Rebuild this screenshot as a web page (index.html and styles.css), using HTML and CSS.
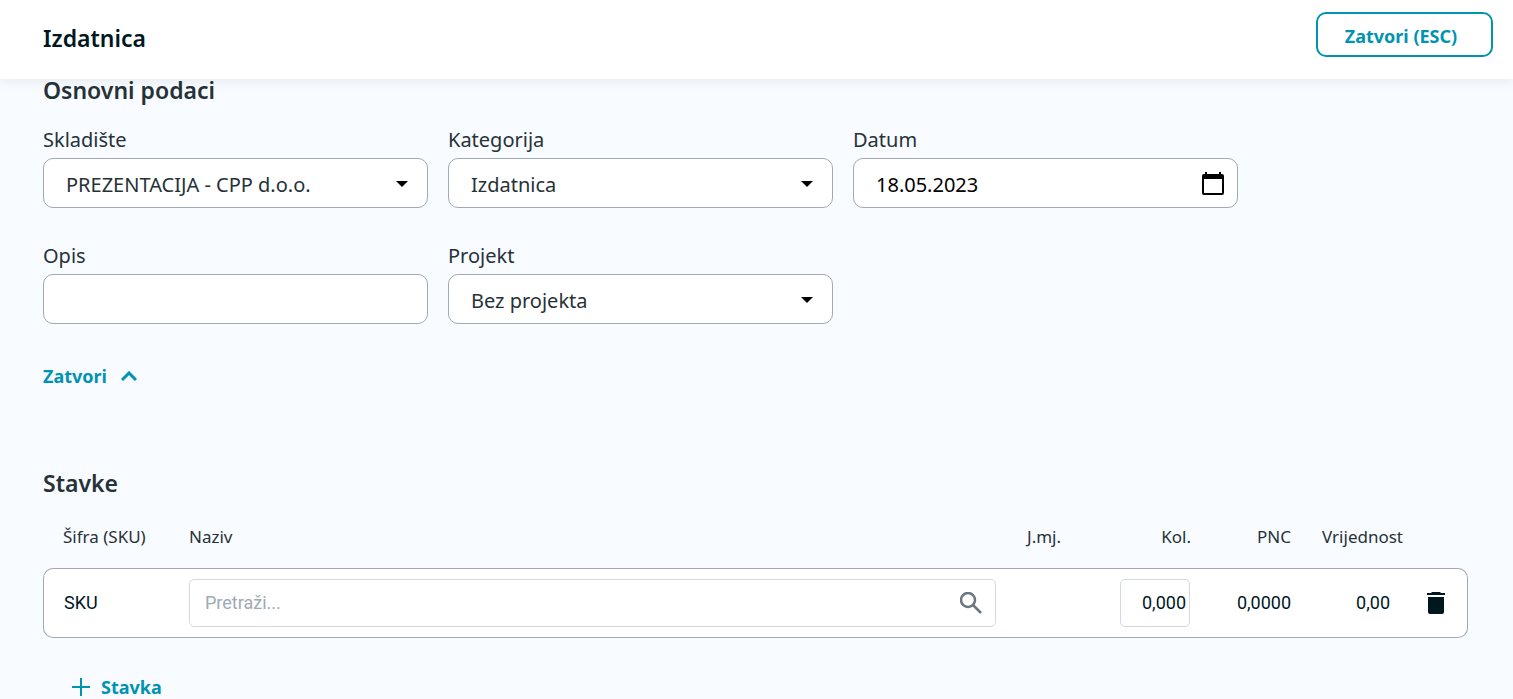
FILE: index.html
```
<!DOCTYPE html>
<html lang="hr">
<head>
    <meta charset="UTF-8">
    <meta name="viewport" content="width=device-width, initial-scale=1.0">
    <title>Izdatnica</title>
    <link rel="stylesheet" href="styles.css">
</head>
<body>
    <header class="topbar">
        <h1 class="title">Izdatnica</h1>
        <button type="button" class="btn-outline">Zatvori (ESC)</button>
    </header>

    <main class="content">
        <section>
            <h2 class="section-title">Osnovni podaci</h2>
            <form class="fields">
                <div class="field">
                    <label for="skladiste">Skladište</label>
                    <div class="control">
                        <select id="skladiste">
                            <option>PREZENTACIJA - CPP d.o.o.</option>
                        </select>
                        <svg class="caret" viewBox="0 0 12 6"><path d="M0 0h12L6 6z"/></svg>
                    </div>
                </div>
                <div class="field">
                    <label for="kategorija">Kategorija</label>
                    <div class="control">
                        <select id="kategorija">
                            <option>Izdatnica</option>
                        </select>
                        <svg class="caret" viewBox="0 0 12 6"><path d="M0 0h12L6 6z"/></svg>
                    </div>
                </div>
                <div class="field">
                    <label for="datum">Datum</label>
                    <div class="control">
                        <input type="text" id="datum" class="date" value="18.05.2023">
                        <button type="button" class="calendar" aria-label="Odaberi datum">
                            <svg viewBox="0 0 22 24"><path d="M3 0h2v2h12V0h2v2h1a2 2 0 0 1 2 2v17a2 2 0 0 1-2 2H2a2 2 0 0 1-2-2V4a2 2 0 0 1 2-2h1zM2 7v14h18V7z"/></svg>
                        </button>
                    </div>
                </div>
                <div class="field">
                    <label for="opis">Opis</label>
                    <div class="control">
                        <input type="text" id="opis">
                    </div>
                </div>
                <div class="field">
                    <label for="projekt">Projekt</label>
                    <div class="control">
                        <select id="projekt">
                            <option>Bez projekta</option>
                        </select>
                        <svg class="caret" viewBox="0 0 12 6"><path d="M0 0h12L6 6z"/></svg>
                    </div>
                </div>
            </form>
            <button type="button" class="btn-link">
                Zatvori
                <svg class="chevron" viewBox="0 0 16 10"><path d="M1 9l7-7 7 7"/></svg>
            </button>
        </section>

        <section class="items">
            <h2 class="section-title">Stavke</h2>
            <table class="items-table">
                <thead>
                    <tr>
                        <th class="col-sku">Šifra (SKU)</th>
                        <th class="col-name">Naziv</th>
                        <th class="col-unit">J.mj.</th>
                        <th class="col-qty">Kol.</th>
                        <th class="col-price">PNC</th>
                        <th class="col-value">Vrijednost</th>
                        <th class="col-delete"></th>
                    </tr>
                </thead>
                <tbody>
                    <tr>
                        <td class="col-sku">SKU</td>
                        <td class="col-name">
                            <div class="search">
                                <input type="text" placeholder="Pretraži..." aria-label="Pretraži">
                                <svg viewBox="0 0 22 22"><circle cx="8" cy="8" r="7"/><path d="M13 13l8 8"/></svg>
                            </div>
                        </td>
                        <td class="col-unit"></td>
                        <td class="col-qty"><input type="text" class="qty" value="0,000" aria-label="Kol."></td>
                        <td class="col-price">0,0000</td>
                        <td class="col-value">0,00</td>
                        <td class="col-delete">
                            <button type="button" class="trash" aria-label="Obriši stavku">
                                <svg viewBox="0 0 18 22"><path d="M5 0h8l1 1h4v2H0V1h4zM1 5h16v15a2 2 0 0 1-2 2H3a2 2 0 0 1-2-2z"/></svg>
                            </button>
                        </td>
                    </tr>
                </tbody>
            </table>
            <button type="button" class="btn-link btn-add">
                <svg class="plus" viewBox="0 0 18 18"><path d="M9 0v18M0 9h18"/></svg>
                Stavka
            </button>
        </section>
    </main>
</body>
</html>
```
FILE: styles.css
```
* {
    box-sizing: border-box;
}

body {
    margin: 0;
    min-height: 100vh;
    background: #f8fbff;
    color: #263238;
    font-family: "Noto Sans", "Open Sans", sans-serif;
    font-size: 20px;
}

button,
input,
select {
    font: inherit;
    color: inherit;
}

button {
    padding: 0;
    border: 0;
    background: none;
    cursor: pointer;
}

svg {
    display: block;
}

.topbar {
    position: sticky;
    top: 0;
    z-index: 1;
    display: flex;
    align-items: flex-start;
    justify-content: space-between;
    height: 79px;
    padding: 12px 20px 0 43px;
    background: #fff;
    box-shadow: 0 2px 12px rgba(0, 20, 30, 0.08);
}

.title,
.section-title {
    margin: 0;
    font-size: 23px;
    font-weight: 600;
    line-height: 22px;
}

.title {
    padding-top: 15px;
    color: #00171f;
}

.btn-outline {
    min-width: 177px;
    height: 45px;
    padding: 2px 30px 0 23px;
    border: 2px solid #0093b2;
    border-radius: 10px;
    color: #0093b2;
    font-size: 18px;
    font-weight: 700;
}

.content {
    padding: 0 45px 0 43px;
}

/* Form fields */
.fields {
    display: grid;
    grid-template-columns: repeat(3, minmax(0, 385px));
    gap: 36px 20px;
    padding-top: 27px;
}

.field label {
    display: block;
    padding-bottom: 6px;
    line-height: 24px;
}

.control {
    position: relative;
}

.control input,
.control select {
    display: block;
    width: 100%;
    height: 50px;
    padding: 3px 50px 0 22px;
    border: 1px solid #a0a9b5;
    border-radius: 10px;
    background: #fff;
    appearance: none;
}

.control .date {
    color: #000;
}

.caret {
    position: absolute;
    top: 23px;
    right: 20px;
    width: 12px;
    height: 6px;
    pointer-events: none;
}

.calendar {
    position: absolute;
    top: 14px;
    right: 14px;
    color: #000;
}

.calendar svg {
    width: 22px;
    height: 24px;
    fill: currentColor;
}

.btn-link {
    display: flex;
    align-items: center;
    gap: 14px;
    margin-top: 40px;
    color: #0093b2;
    font-size: 18px;
    font-weight: 700;
    line-height: 24px;
}

.btn-link svg {
    fill: none;
    stroke: currentColor;
    stroke-width: 2;
}

.btn-link .chevron {
    width: 16px;
    height: 10px;
    stroke-width: 3;
}

/* Items */
.items {
    padding-top: 84px;
}

.items-table {
    width: 100%;
    margin-top: 31px;
    border-spacing: 0;
    table-layout: fixed;
    font-size: 18px;
}

.items-table th {
    height: 43px;
    padding: 0;
    font-size: 17px;
    font-weight: 400;
    line-height: 24px;
    text-align: left;
    vertical-align: top;
}

.items-table td {
    height: 70px;
    padding: 0 0 2px;
    border: solid #a0a9b5;
    border-width: 1px 0;
    background: #fff;
    color: #00171f;
    font-family: Roboto, sans-serif;
}

.items-table td:first-child {
    border-left-width: 1px;
    border-radius: 10px 0 0 10px;
}

.items-table td:last-child {
    border-right-width: 1px;
    border-radius: 0 10px 10px 0;
}

.items-table td.col-name,
.items-table td.col-qty,
.items-table td.col-delete {
    padding-bottom: 0;
}

.items-table .col-sku {
    width: 146px;
    padding-left: 20px;
}

.items-table .col-unit {
    width: 124px;
    padding-left: 31px;
}

.items-table .col-qty {
    width: 71px;
    text-align: right;
}

.items-table .col-price {
    width: 100px;
    text-align: right;
}

.items-table .col-value {
    width: 112px;
    text-align: right;
}

.items-table td.col-value {
    padding-right: 13px;
}

.items-table .col-delete {
    width: 65px;
    padding-left: 24px;
}

.search {
    position: relative;
}

.search input,
.qty {
    display: block;
    width: 100%;
    height: 48px;
    border: 1px solid #d3d8e1;
    border-radius: 5px;
    background: #fff;
}

.search input {
    padding: 0 50px 2px 15px;
}

.search input::placeholder {
    color: #a0a9b5;
}

.search svg {
    position: absolute;
    top: 13px;
    right: 14px;
    width: 22px;
    height: 22px;
    fill: none;
    stroke: #6b7680;
    stroke-width: 2.5;
}

.items-table .qty {
    width: 70px;
    padding: 0 3px 2px;
    text-align: right;
}

.trash {
    display: block;
}

.trash svg {
    width: 18px;
    height: 22px;
    fill: currentColor;
}

.btn-add {
    gap: 11px;
    margin: 37px 0 0 29px;
}

.plus {
    width: 18px;
    height: 18px;
}
```
